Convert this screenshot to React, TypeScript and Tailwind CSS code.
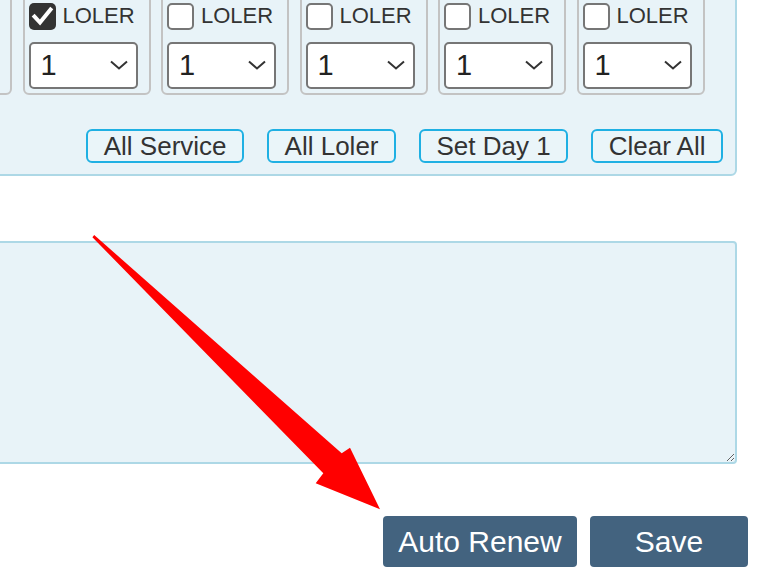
import React from 'react';

const cells = [false, false, false, false, false];
cells[0] = true;
const actions = ['All Service', 'All Loler', 'Set Day 1', 'Clear All'];

const Checkbox = ({ checked }: { checked: boolean }) =>
    checked ? (
        <span className="flex h-[27px] w-[27px] items-center justify-center rounded-[5px] bg-[#333333]">
            <svg width="27" height="27" viewBox="0 0 27 27">
                <polyline
                    points="5.5,13.5 11,19.5 21.5,6.5"
                    fill="none"
                    stroke="white"
                    strokeWidth="4"
                    strokeLinecap="square"
                />
            </svg>
        </span>
    ) : (
        <span className="h-[27px] w-[27px] rounded-[5px] border-2 border-[#767676] bg-white" />
    );

const Cell = ({ checked }: { checked: boolean }) => (
    <div className="w-[128px] shrink-0 rounded-md border-2 border-[#c3c3c3] px-[4px] pb-[4px] pt-[6px]">
        <div className="flex h-[28px] items-center gap-[7px]">
            <Checkbox checked={checked} />
            <span className="text-[22px] leading-none text-[#333333]">LOLER</span>
        </div>
        <div className="relative mt-[12px] w-[109px]">
            <select className="h-[47px] w-full appearance-none rounded-[5px] border-2 border-[#767676] bg-white pl-[10px] text-[29px] text-[#222222] outline-none">
                <option>1</option>
            </select>
            <svg
                className="pointer-events-none absolute right-[10px] top-[18px]"
                width="18"
                height="10"
                viewBox="0 0 18 10"
            >
                <polyline
                    points="1,1.5 9,8.5 17,1.5"
                    fill="none"
                    stroke="#333333"
                    strokeWidth="2"
                />
            </svg>
        </div>
    </div>
);

export default function App() {
    return (
        <div className="relative h-[584px] w-[762px] overflow-hidden bg-white font-['Liberation_Sans',Arial,sans-serif]">
            {/* options panel */}
            <div className="-ml-[130px] -mt-[16px] w-[867px] rounded-md border-2 border-[#add8e6] bg-[#e8f3f8] pb-[11px] pl-[12px] pr-[12px] pt-[8px]">
                <div className="flex gap-[10.5px]">
                    {/* previous cell, scrolled out of view */}
                    <div className="h-[101px] w-[128px] shrink-0 rounded-md border-2 border-[#c3c3c3]" />
                    {cells.map((c, i) => (
                        <Cell key={i} checked={c} />
                    ))}
                </div>
                <div className="mt-[34px] flex justify-end gap-[23px]">
                    {actions.map((a) => (
                        <button
                            key={a}
                            className="h-[34px] rounded-[6px] border-2 border-[#1fb0e3] bg-[#eaf5f9] px-[15.5px] text-[26px] leading-none text-[#333333]"
                        >
                            {a}
                        </button>
                    ))}
                </div>
            </div>

            {/* notes */}
            <textarea className="-ml-[20px] mt-[65px] block h-[223px] w-[757px] rounded-[4px] border-2 border-[#add8e6] bg-[#e8f3f8] outline-none" />

            <div className="mt-[52px] flex justify-end gap-[13px] pr-[14px]">
                <button className="h-[51px] w-[194px] rounded-[4px] bg-[#43637f] text-[30px] leading-none text-white">
                    Auto Renew
                </button>
                <button className="h-[51px] w-[158px] rounded-[4px] bg-[#43637f] text-[30px] leading-none text-white">
                    Save
                </button>
            </div>

            {/* annotation arrow */}
            <svg
                className="pointer-events-none absolute left-0 top-0"
                width="762"
                height="584"
                viewBox="0 0 762 584"
            >
                <polygon
                    points="94.2,235 341.7,453.3 350,447.7 380,509.3 315.7,483.3 323.3,473.3 92.4,237.2"
                    fill="#ff0000"
                />
            </svg>
        </div>
    );
}
